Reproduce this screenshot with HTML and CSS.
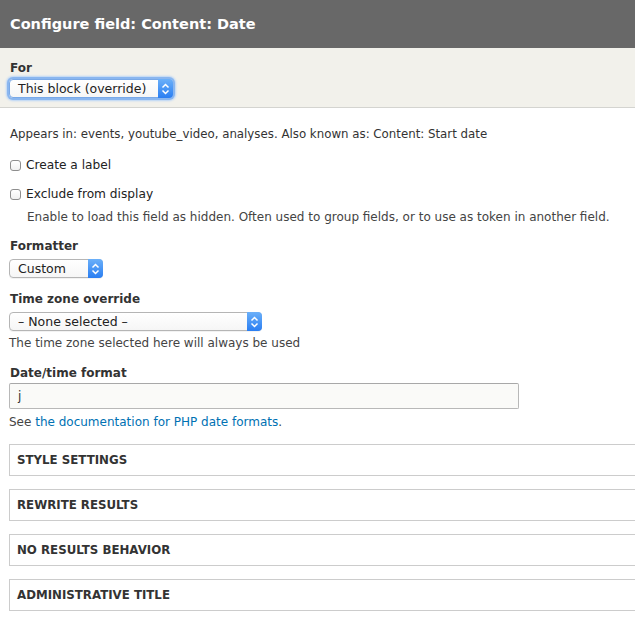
FILE: index.html
```html
<!DOCTYPE html>
<html>
<head>
<meta charset="utf-8">
<link rel="stylesheet" href="styles.css">
</head>
<body>
<header class="titlebar"><h1 class="title">Configure field: Content: Date</h1></header>
<section class="for-bar">
  <div class="label label-for">For</div>
  <div class="select select-for focused">
    <span class="select-text">This block (override)</span>
    <span class="select-btn"><svg width="9" height="12" viewBox="0 0 9 12"><path d="M1.5 4.5 L4.5 1.5 L7.5 4.5 M1.5 7.5 L4.5 10.5 L7.5 7.5" fill="none" stroke="#fff" stroke-width="1.5"/></svg></span>
  </div>
</section>
<main class="content">
  <p class="line appears">Appears in: events, youtube_video, analyses. Also known as: Content: Start date</p>
  <label class="check check-first"><span class="box"></span>Create a label</label>
  <label class="check check-second"><span class="box"></span>Exclude from display</label>
  <p class="line desc indent">Enable to load this field as hidden. Often used to group fields, or to use as token in another field.</p>

  <div class="label label-gap label-fmt">Formatter</div>
  <div class="select select-custom">
    <span class="select-text">Custom</span>
    <span class="select-btn"><svg width="9" height="12" viewBox="0 0 9 12"><path d="M1.5 4.5 L4.5 1.5 L7.5 4.5 M1.5 7.5 L4.5 10.5 L7.5 7.5" fill="none" stroke="#fff" stroke-width="1.5"/></svg></span>
  </div>

  <div class="label label-gap label-tz">Time zone override</div>
  <div class="select select-tz">
    <span class="select-text">– None selected –</span>
    <span class="select-btn"><svg width="9" height="12" viewBox="0 0 9 12"><path d="M1.5 4.5 L4.5 1.5 L7.5 4.5 M1.5 7.5 L4.5 10.5 L7.5 7.5" fill="none" stroke="#fff" stroke-width="1.5"/></svg></span>
  </div>
  <p class="line desc desc-tz">The time zone selected here will always be used</p>

  <div class="label label-gap">Date/time format</div>
  <div class="text-input">j</div>
  <p class="line desc desc-see">See <a class="link" href="#">the documentation for PHP date formats</a>.</p>

  <div class="fieldsets">
    <div class="fieldset"><span class="legend">Style settings</span></div>
    <div class="fieldset"><span class="legend">Rewrite results</span></div>
    <div class="fieldset"><span class="legend">No results behavior</span></div>
    <div class="fieldset"><span class="legend">Administrative title</span></div>
  </div>
</main>
</body>
</html>
```
FILE: styles.css
```css
html, body {
  margin: 0;
  padding: 0;
  background: #fff;
  overflow: hidden;
}
body {
  font-family: "DejaVu Sans", sans-serif;
  font-size: 12px;
  color: #333;
  width: 635px;
  height: 627px;
}
.titlebar {
  height: 48px;
  background: #686868;
  display: flex;
  align-items: center;
  padding-left: 10px;
}
.title {
  margin: 0;
  font-size: 14.5px;
  font-weight: bold;
  color: #fff;
  line-height: 20px;
  padding-bottom: 1px;
}
.for-bar {
  background: #f2f1eb;
  border-bottom: 1px solid #d4d4d0;
  padding: 12px 9px 9px;
  height: 38px;
}
.label {
  font-weight: bold;
  font-size: 12px;
  line-height: 16px;
  color: #333;
  margin-bottom: 5px;
  padding-left: 1px;
}
.label-for {
  margin-bottom: 3px;
}
.select {
  position: relative;
  height: 19px;
  box-sizing: border-box;
  border: 1px solid #b5b5b5;
  border-radius: 4px;
  background: linear-gradient(#fff, #f6f6f6);
  display: flex;
  align-items: center;
  font-size: 12.5px;
  color: #222;
  box-shadow: 0 1px 0 rgba(0,0,0,0.05);
}
.select-text {
  flex: 1;
  padding-left: 8px;
  line-height: 17px;
  white-space: nowrap;
}
.select-btn {
  width: 15px;
  height: 19px;
  margin: -1px -1px -1px 0;
  border-radius: 0 4px 4px 0;
  background: linear-gradient(#6bb0f9, #2a7ef2);
  display: flex;
  align-items: center;
  justify-content: center;
}
.select-for {
  width: 164px;
}
.focused {
  box-shadow: 0 0 0 2px #8ab6ef, 0 0 2px 3px #b8d4f7;
  border-color: #79a9e8;
}
.select-custom {
  width: 94px;
}
.select-tz {
  width: 253px;
}
.content {
  padding: 18px 9px 0 9px;
}
.line {
  margin: 0;
  line-height: 16px;
}
.appears {
  padding-left: 1px;
  font-size: 11.8px;
}
.check {
  display: flex;
  align-items: center;
  line-height: 16px;
  font-size: 12.2px;
  color: #222;
  padding-left: 1px;
}
.check-first {
  margin-top: 15px;
}
.check-second {
  margin-top: 13px;
}
.box {
  width: 11px;
  height: 11px;
  box-sizing: border-box;
  border: 1px solid #8e8e8e;
  border-radius: 3px;
  background: linear-gradient(#fff, #f0f0f0);
  margin-right: 5px;
}
.desc {
  color: #444;
}
.indent {
  margin-top: 7px;
  padding-left: 18px;
}
.label-gap {
  margin-top: 14px;
}
.label-fmt,
.label-tz {
  margin-top: 13px;
}
.desc-tz {
  margin-top: 4px;
}
.text-input {
  width: 510px;
  height: 26px;
  box-sizing: border-box;
  border: 1px solid #b8b8b8;
  border-top-color: #a8a8a8;
  border-radius: 2px;
  background: #fafaf8;
  padding-left: 8px;
  line-height: 24px;
  font-size: 12px;
  color: #333;
  margin-top: -3px;
}
.desc-see {
  margin-top: 5px;
}
.link {
  color: #0071b3;
  text-decoration: none;
}
.fieldsets {
  margin-top: 14px;
  display: flex;
  flex-direction: column;
  gap: 13px;
  margin-right: -9px;
}
.fieldset {
  height: 32px;
  box-sizing: border-box;
  border: 1px solid #ccc;
  border-right: none;
  display: flex;
  align-items: center;
  padding-left: 7px;
}
.legend {
  text-transform: uppercase;
  font-weight: bold;
  font-size: 11.8px;
  color: #333;
}
```
